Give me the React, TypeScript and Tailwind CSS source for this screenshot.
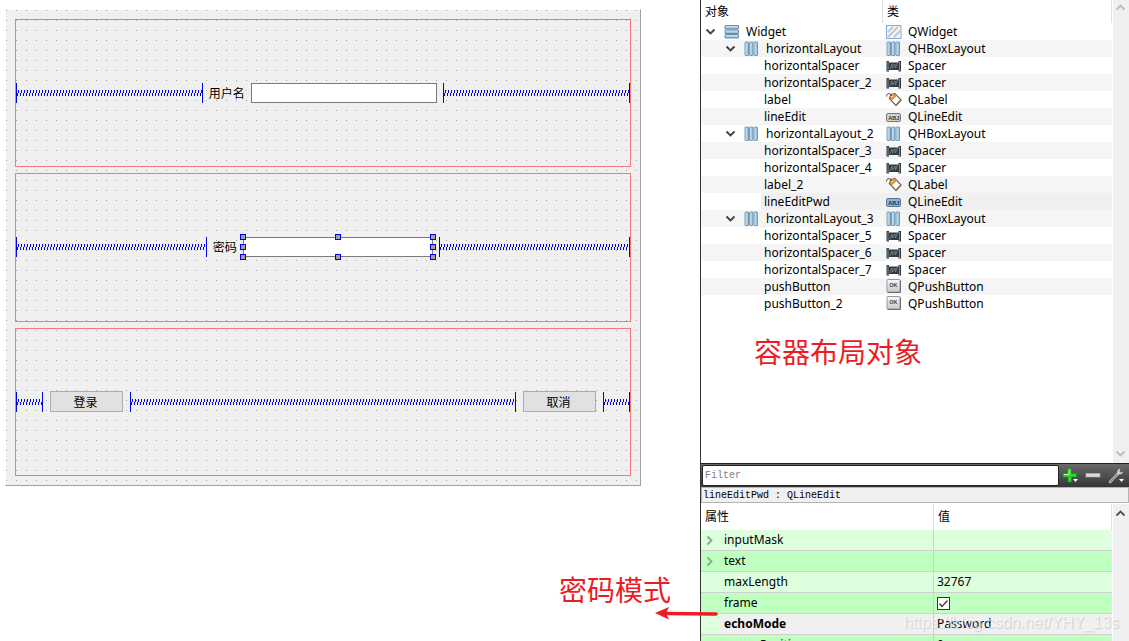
import React from "react";

type IconKind = "vbox" | "hbox" | "widget" | "spacer" | "label" | "edit" | "editActive" | "button";

type TreeNode = {
  level: 0 | 1 | 2;
  name: string;
  cls: string;
  icon: IconKind;
  selected?: boolean;
};

const NODES: TreeNode[] = [
  { level: 0, name: "Widget", cls: "QWidget", icon: "widget" },
  { level: 1, name: "horizontalLayout", cls: "QHBoxLayout", icon: "hbox" },
  { level: 2, name: "horizontalSpacer", cls: "Spacer", icon: "spacer" },
  { level: 2, name: "horizontalSpacer_2", cls: "Spacer", icon: "spacer" },
  { level: 2, name: "label", cls: "QLabel", icon: "label" },
  { level: 2, name: "lineEdit", cls: "QLineEdit", icon: "edit" },
  { level: 1, name: "horizontalLayout_2", cls: "QHBoxLayout", icon: "hbox" },
  { level: 2, name: "horizontalSpacer_3", cls: "Spacer", icon: "spacer" },
  { level: 2, name: "horizontalSpacer_4", cls: "Spacer", icon: "spacer" },
  { level: 2, name: "label_2", cls: "QLabel", icon: "label" },
  { level: 2, name: "lineEditPwd", cls: "QLineEdit", icon: "editActive", selected: true },
  { level: 1, name: "horizontalLayout_3", cls: "QHBoxLayout", icon: "hbox" },
  { level: 2, name: "horizontalSpacer_5", cls: "Spacer", icon: "spacer" },
  { level: 2, name: "horizontalSpacer_6", cls: "Spacer", icon: "spacer" },
  { level: 2, name: "horizontalSpacer_7", cls: "Spacer", icon: "spacer" },
  { level: 2, name: "pushButton", cls: "QPushButton", icon: "button" },
  { level: 2, name: "pushButton_2", cls: "QPushButton", icon: "button" },
];

export default function App() {
  return (
    <main className="relative grid h-screen grid-cols-[1fr_429px] overflow-hidden bg-white font-['Noto_Sans','Noto_Sans_CJK_SC',sans-serif] text-xs text-black">
      <FormCanvas />
      <aside className="flex min-h-0 flex-col border-l border-[#333]">
        <ObjectTree />
        <FilterBar />
        <div className="h-4 shrink-0 border border-[#b4b4b4] bg-[#f0f0f0] pl-px font-['Liberation_Mono',monospace] text-[10px] leading-4">
          lineEditPwd : QLineEdit
        </div>
        <PropertyEditor />
      </aside>
      <Notes />
    </main>
  );
}

function FormCanvas() {
  return (
    <div className="pt-[9px] pr-[59px] pl-[5px]">
      <form
        className="flex h-[477px] flex-col gap-1.5 border border-t-white border-r-[#a0a0a0] border-b-[#a0a0a0] border-l-white bg-[linear-gradient(90deg,transparent_1px,#f0f0f0_1px),linear-gradient(#a0a0a0_1px,#f0f0f0_1px)] bg-size-[10px_10px] p-[9px] font-['Noto_Sans_CJK_SC',sans-serif]"
        onSubmit={(e) => e.preventDefault()}
      >
        <LayoutBox>
          <Spacer />
          <label htmlFor="user">用户名</label>
          <LineEdit id="user" />
          <Spacer />
        </LayoutBox>
        <LayoutBox>
          <Spacer />
          <label htmlFor="pwd">密码</label>
          <LineEdit id="pwd" type="password" selected />
          <Spacer />
        </LayoutBox>
        <LayoutBox>
          <Spacer fixed />
          <FormButton>登录</FormButton>
          <Spacer />
          <FormButton>取消</FormButton>
          <Spacer fixed />
        </LayoutBox>
      </form>
    </div>
  );
}

function LayoutBox({ children }: { children: React.ReactNode }) {
  return <div className="flex flex-1 items-center gap-1.5 border border-[#f47878]">{children}</div>;
}

function Spacer({ fixed }: { fixed?: boolean }) {
  return (
    <div className={fixed ? "w-[27px]" : "flex-1"}>
      <div className="flex h-5 flex-col justify-center border-x border-[#0000f0]">
        <div className="ml-px h-[3px] bg-[linear-gradient(90deg,#0000f0_1px,transparent_1px)] bg-size-[3px_3px]" />
        <div className="h-[3px] bg-[linear-gradient(90deg,#0000f0_1px,transparent_1px)] bg-size-[3px_3px]" />
      </div>
    </div>
  );
}

function LineEdit({ id, type = "text", selected }: { id: string; type?: string; selected?: boolean }) {
  return (
    <div className="relative flex flex-1">
      <input
        id={id}
        type={type}
        className="h-5 w-full min-w-0 border border-[#7a7a7a] bg-white px-1 outline-none"
      />
      {selected && <Handles />}
    </div>
  );
}

function FormButton({ children }: { children: React.ReactNode }) {
  return (
    <button type="button" className="mx-px h-[21px] w-[73px] border border-[#adadad] bg-[#e1e1e1] pr-0.5 leading-[19px]">
      {children}
    </button>
  );
}

function Handles() {
  return (
    <div className="pointer-events-none absolute -inset-[3px] grid grid-cols-3 grid-rows-3">
      {[
        "place-self-start",
        "self-start justify-self-center",
        "self-start justify-self-end",
        "self-center justify-self-start",
        "invisible",
        "self-center justify-self-end",
        "self-end justify-self-start",
        "self-end justify-self-center",
        "place-self-end",
      ].map((place) => (
        <span key={place} className={`size-1.5 border border-[#0000f0] bg-[#a0a0a0] ${place}`} />
      ))}
    </div>
  );
}

function ObjectTree() {
  return (
    <section className="flex min-h-0 flex-1">
      <div className="flex-1 pr-px">
        <table className="w-full table-fixed border-separate border-spacing-0">
          <colgroup>
            <col className="w-[182px]" />
            <col />
          </colgroup>
          <thead>
            <tr className="text-left leading-[17px]">
              <th className="h-[23px] border-r border-[#e0e0e0] p-0 pl-1 font-normal">对象</th>
              <th className="h-[23px] border-r border-[#e0e0e0] p-0 pl-1 font-normal">类</th>
            </tr>
          </thead>
          <tbody>
            {NODES.map((node) => (
              <TreeRow key={node.name} node={node} />
            ))}
          </tbody>
        </table>
      </div>
      <div className="flex w-4 flex-col justify-between bg-[#f0f0f0] pt-0.5 pb-1 text-[#bdbdbd]">
        <Chevron dir="up" />
        <Chevron dir="down" />
      </div>
    </section>
  );
}

function TreeRow({ node }: { node: TreeNode }) {
  return (
    <tr className={node.selected ? "h-[17px]" : "h-[17px] even:bg-[#f5f5f5]"}>
      <td className="p-0">
        <div className="flex h-[17px] items-center leading-[17px]">
          {node.level === 2 ? (
            <span className={`ml-[60px] h-full flex-1 pl-[3px] ${node.selected ? "bg-[#f0f0f0]" : ""}`}>
              {node.name}
            </span>
          ) : (
            <>
              <span className={`w-5 pl-0.5 text-[#404040] ${node.level === 1 ? "ml-5" : ""}`}>
                <Chevron dir="down" />
              </span>
              <span className="ml-[3px]">
                <NodeIcon kind={node.level === 0 ? "vbox" : "hbox"} />
              </span>
              <span className="ml-1.5">{node.name}</span>
            </>
          )}
        </div>
      </td>
      <td className={`p-0 ${node.selected ? "bg-[#f0f0f0]" : ""}`}>
        <div className="flex h-[17px] items-center gap-1.5 pl-[3px] leading-[17px]">
          <NodeIcon kind={node.icon} />
          {node.cls}
        </div>
      </td>
    </tr>
  );
}

function Chevron({ dir }: { dir: "up" | "down" | "right" }) {
  const d = {
    up: "M3.500 7.500 7.500 3.500l4 4",
    down: "M3.500 3.500 7.500 7.500l4-4",
    right: "M6.500 1.500 10.500 5.500l-4 4",
  }[dir];
  return (
    <svg viewBox="0 0 16 11" className="h-[11px] w-4" fill="none" stroke="currentColor" strokeWidth="1.800">
      <path d={d} />
    </svg>
  );
}

function NodeIcon({ kind }: { kind: IconKind }) {
  return (
    <svg viewBox="0 0 16 16" className="size-4 shrink-0">
      <defs>
        <linearGradient id="bar-v" x1="0" x2="0" y1="0" y2="1">
          <stop offset="0" stopColor="#d5ecfb" />
          <stop offset="1" stopColor="#8ab8da" />
        </linearGradient>
        <linearGradient id="bar-h" x1="0" x2="1" y1="0" y2="0">
          <stop offset="0" stopColor="#d5ecfb" />
          <stop offset="1" stopColor="#8ab8da" />
        </linearGradient>
        <linearGradient id="key" x1="0" x2="0" y1="0" y2="1">
          <stop offset="0" stopColor="#fafafa" />
          <stop offset="1" stopColor="#c8c8c8" />
        </linearGradient>
      </defs>
      {ICON_SHAPES[kind]}
    </svg>
  );
}

const ICON_SHAPES: Record<IconKind, React.ReactNode> = {
  vbox: [1.5, 6, 10.5].map((y) => (
    <rect key={y} x="1" y={y} width="13.5" height="3.5" rx="0.5" fill="url(#bar-v)" stroke="#5f7f98" strokeWidth="0.9" />
  )),
  hbox: [1, 5.5, 10].map((x) => (
    <rect key={x} x={x} y="1" width="3.5" height="13.5" rx="0.5" fill="url(#bar-h)" stroke="#7291a8" strokeWidth="0.9" />
  )),
  widget: (
    <>
      <rect x="0.5" y="1.5" width="14.5" height="13" fill="#f4f4f4" stroke="#7da7e0" />
      <path d="M2 8 7 3M2 13 12 3M8 13l6-6" stroke="#c6c6c6" strokeWidth="2" />
    </>
  ),
  spacer: (
    <>
      <path d="M0.500 3h2.500v1.500h9.500V3H15v10.500h-2.500V12H3v1.500H0.500z" fill="#343c41" />
      <path d="M2 4v9M13.500 4v9" stroke="#939da2" strokeWidth="0.800" />
      <path d="m4 11 2-5 .5 4 2.500-4 .5 4 2-5" fill="none" stroke="#7f939e" strokeWidth="0.700" />
    </>
  ),
  label: (
    <>
      <path d="M3.500 6.500 5 2.500 9 1.500l6 6.500-5 5.500z" fill="#fff" stroke="#5b4631" strokeWidth="1.100" />
      <path d="M3.800 6.200 5 2.700 8.800 1.800l2 2.200-5 4.600z" fill="#e2943e" />
      <path d="m10 13.200 5-5.200" stroke="#8c6b48" strokeWidth="1.600" />
      <circle cx="6" cy="4" r="0.900" fill="#fff" />
      <path d="M6 4C4 .6.500 1 .500 4.500" fill="none" stroke="#333" />
    </>
  ),
  edit: (
    <>
      <rect x="0.500" y="4.500" width="14" height="8" rx="1.500" fill="#d2d2d2" stroke="#777" />
      <text x="2.200" y="10.500" fontSize="5.500" fontWeight="bold" fill="#333" fontFamily="Liberation Sans">
        ABJ
      </text>
    </>
  ),
  editActive: (
    <>
      <rect x="0.500" y="4.500" width="14" height="8" rx="1.500" fill="#8db5d8" stroke="#547a9e" />
      <text x="2.200" y="10.500" fontSize="5.500" fontWeight="bold" fill="#12324f" fontFamily="Liberation Sans">
        ABJ
      </text>
    </>
  ),
  button: (
    <>
      <rect x="1" y="0.500" width="13" height="12.500" rx="1" fill="url(#key)" stroke="#999" />
      <path d="M1.500 13.500h13V1.500" fill="none" stroke="#6d6d6d" />
      <text x="3.200" y="8" fontSize="5.500" fontWeight="bold" fill="#444" fontFamily="Liberation Sans">
        OK
      </text>
    </>
  ),
};

function FilterBar() {
  return (
    <div className="flex h-6 shrink-0 items-center border-t border-[#222] bg-linear-to-b from-[#6a6a6a] to-[#363636] pr-1 pl-px">
      <input
        aria-label="Filter"
        placeholder="Filter"
        className="h-[21px] min-w-0 flex-1 rounded-xs border border-[#222] bg-white pl-0.5 font-['Liberation_Mono',monospace] text-[10px] outline-none placeholder:text-[#808080]"
      />
      <div className="flex w-[66px] justify-between pl-[3px]">
        <button type="button" aria-label="Add">
          <svg viewBox="0 0 17 17" className="size-[17px]">
            <path d="M6 1.500h3.500v5H14.500V10h-5v5H6v-5H1V6.500h5z" fill="#2fd62f" stroke="#0c9f10" strokeWidth="0.700" />
            <path d="M7 2.500v5H2" fill="none" stroke="#b4ffac" />
            <path d="M11 12h5l-2.500 3z" fill="#fff" />
          </svg>
        </button>
        <button type="button" aria-label="Remove">
          <svg viewBox="0 0 17 17" className="size-[17px]">
            <rect x="1" y="6.500" width="14" height="3.500" fill="#dcdcdc" stroke="#aaa" strokeWidth="0.700" />
          </svg>
        </button>
        <button type="button" aria-label="Configure">
          <svg viewBox="0 0 17 17" className="size-[17px]">
            <path d="m2 15 8-8.500" stroke="#b9b9b9" strokeWidth="2.600" strokeLinecap="round" />
            <path d="M12.500 1.500c-3 .5-4 3-2.500 5s4.500 1 5-2l-2.500 1-1-1.500z" fill="#d0d0d0" />
            <path d="m2 15 7-7.500" stroke="#555" strokeWidth="0.700" />
            <path d="M11 12h5l-2.500 3z" fill="#fff" />
          </svg>
        </button>
      </div>
    </div>
  );
}

function PropertyEditor() {
  return (
    <section className="flex h-[138px] shrink-0 overflow-hidden pt-px">
      <div className="flex-1 pr-px">
        <table className="w-full table-fixed border-separate border-spacing-0">
          <colgroup>
            <col className="w-[233px]" />
            <col />
          </colgroup>
          <thead>
            <tr className="text-left">
              <th className="h-[26px] border-r border-[#e0e0e0] p-0 pl-1 font-normal">属性</th>
              <th className="h-[26px] border-r border-[#e0e0e0] p-0 pl-1 font-normal">值</th>
            </tr>
          </thead>
          <tbody>
            <PropertyRow name="inputMask" expandable />
            <PropertyRow name="text" expandable />
            <PropertyRow name="maxLength">32767</PropertyRow>
            <PropertyRow name="frame">
              <Tick />
            </PropertyRow>
            <PropertyRow name="echoMode" selected>
              Password
            </PropertyRow>
            <PropertyRow name="cursorPosition">0</PropertyRow>
          </tbody>
        </table>
      </div>
      <div className="w-4 bg-[#f0f0f0] py-1 text-[#505050]">
        <Chevron dir="up" />
      </div>
    </section>
  );
}

function PropertyRow({
  name,
  expandable,
  selected,
  children,
}: {
  name: string;
  expandable?: boolean;
  selected?: boolean;
  children?: React.ReactNode;
}) {
  return (
    <tr className="bg-[#bfffbf] odd:bg-[#ddffdd]">
      <td className="h-[21px] border-r border-b border-[#d0d0d0] p-0">
        <div className="flex h-5 items-center leading-5">
          <span className="w-[19px] text-[#8aa88a]">{expandable && <Chevron dir="right" />}</span>
          <span className={`flex-1 pl-1 ${selected ? "bg-[#f0f0f0] font-bold" : ""}`}>{name}</span>
        </div>
      </td>
      <td className={`h-[21px] border-b border-[#d0d0d0] p-0 pl-[3px] leading-5 ${selected ? "bg-[#f0f0f0]" : ""}`}>
        {children}
      </td>
    </tr>
  );
}

function Tick() {
  return (
    <span className="relative block size-[13px]">
      <input
        type="checkbox"
        aria-label="frame"
        defaultChecked
        className="block size-[13px] appearance-none border border-[#333] bg-white"
      />
      <svg viewBox="0 0 13 13" className="pointer-events-none absolute inset-0" fill="none" stroke="#333">
        <path d="m2.500 6.500 2.500 3 5.500-6" strokeWidth="1.200" />
      </svg>
    </span>
  );
}

// red remarks and the watermark, drawn over the editor
function Notes() {
  return (
    <div className="pointer-events-none absolute inset-0 font-['Noto_Sans_CJK_SC',sans-serif] text-[28px] leading-8 text-[#ed1c24]">
      <p className="absolute top-[335px] right-[207px]">容器布局对象</p>
      <p className="absolute right-[458px] bottom-9">密码模式</p>
      <svg viewBox="0 0 64 16" className="absolute right-[410px] bottom-5 h-4 w-16">
        <path d="M10 8.500 61 9" stroke="#ed1c24" strokeWidth="3.500" strokeLinecap="round" />
        <path d="M0 8 14 2l-3 6.300L14 14.500z" fill="#ed1c24" />
      </svg>
      <p className="absolute right-2.5 bottom-1 font-['Liberation_Sans',sans-serif] text-base leading-7 text-white/60 [text-shadow:1px_1px_1px_rgba(0,0,0,0.15)]">
        https://blog.csdn.net/YHY_13s
      </p>
    </div>
  );
}
